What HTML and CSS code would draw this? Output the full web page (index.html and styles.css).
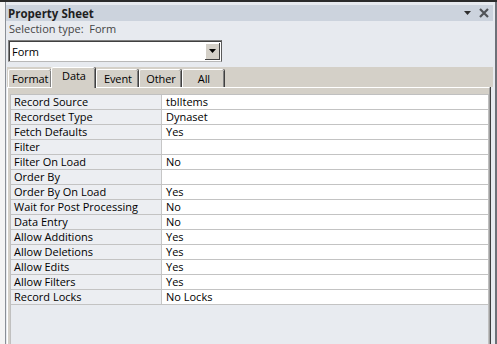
FILE: index.html
```html
<!DOCTYPE html>
<html lang="en">
<head>
    <meta charset="UTF-8">
    <title>Property Sheet</title>
    <link rel="stylesheet" href="styles.css">
</head>
<body>
    <div class="frame">
        <div class="backdrop"></div>
        <div class="sheet">
            <div class="titlebar">
                <span class="title">Property Sheet</span>
                <span class="tools">
                    <svg width="8" height="5" viewBox="0 0 8 5"><path d="M0 0h7L3.5 4z" fill="#2e2e2e"/></svg>
                    <svg width="10" height="10" viewBox="0 0 10 10"><path d="M1 1l8 8M9 1l-8 8" stroke="#505357" stroke-width="2.2"/></svg>
                </span>
            </div>
            <div class="seltype">Selection type:&nbsp; Form</div>
            <div class="combo">
                <span class="combo-text">Form</span>
                <span class="combo-btn"><svg width="7" height="4" viewBox="0 0 7 4"><path d="M0 0h7L3.5 4z" fill="#000"/></svg></span>
            </div>
            <div class="tabs">
                <div class="tab">Format</div>
                <div class="tab active">Data</div>
                <div class="tab">Event</div>
                <div class="tab">Other</div>
                <div class="tab">All</div>
            </div>
            <div class="page">
                <div class="grid">
                    <div class="row"><div class="label">Record Source</div><div class="value">tblItems</div></div>
                    <div class="row"><div class="label">Recordset Type</div><div class="value">Dynaset</div></div>
                    <div class="row"><div class="label">Fetch Defaults</div><div class="value">Yes</div></div>
                    <div class="row"><div class="label">Filter</div><div class="value"></div></div>
                    <div class="row"><div class="label">Filter On Load</div><div class="value">No</div></div>
                    <div class="row"><div class="label">Order By</div><div class="value"></div></div>
                    <div class="row"><div class="label">Order By On Load</div><div class="value">Yes</div></div>
                    <div class="row"><div class="label">Wait for Post Processing</div><div class="value">No</div></div>
                    <div class="row"><div class="label">Data Entry</div><div class="value">No</div></div>
                    <div class="row"><div class="label">Allow Additions</div><div class="value">Yes</div></div>
                    <div class="row"><div class="label">Allow Deletions</div><div class="value">Yes</div></div>
                    <div class="row"><div class="label">Allow Edits</div><div class="value">Yes</div></div>
                    <div class="row"><div class="label">Allow Filters</div><div class="value">Yes</div></div>
                    <div class="row"><div class="label">Record Locks</div><div class="value">No Locks</div></div>
                </div>
            </div>
        </div>
    </div>
</body>
</html>
```

FILE: styles.css
```css
body {
    margin: 0;
    width: 497px;
    height: 344px;
    overflow: hidden;
    background-color: #fff;
    font-family: "Open Sans", "Segoe UI", sans-serif;
    font-size: 11px;
    color: #000;
}
.frame {
    display: flex;
    height: 344px;
    box-sizing: border-box;
    border-top: 2px solid #2b2b2b;
}
.backdrop {
    width: 5px;
    background-color: #f4f4f4;
}
.sheet {
    flex: 1;
    display: flex;
    flex-direction: column;
    padding-top: 3px;
    background-color: #e7eaef;
    border-left: 1px solid #8a8f96;
    border-right: 2px solid #6d7178;
}
.titlebar {
    display: flex;
    align-items: center;
    justify-content: space-between;
    height: 16px;
    margin-right: 2px;
    padding: 0 4px 0 2px;
    background-color: #ccd3dd;
}
.title {
    font-weight: bold;
    font-size: 11.5px;
    color: #1f1f1f;
}
.tools {
    display: flex;
    align-items: center;
    gap: 7px;
}
.seltype {
    height: 15px;
    line-height: 15px;
    padding-left: 3px;
    color: #454545;
}
.combo {
    display: flex;
    align-items: center;
    justify-content: space-between;
    width: 214px;
    height: 22px;
    box-sizing: border-box;
    margin: 4px 0 0 2px;
    padding: 0 1px 0 3px;
    background-color: #fff;
    border: 1px solid #808080;
    border-right-color: #5a5a5a;
    border-bottom-color: #b8b8b8;
    box-shadow: inset 1px 1px 0 #404040;
}
.combo-btn {
    display: flex;
    align-items: center;
    justify-content: center;
    width: 15px;
    height: 17px;
    background-color: #d4d0c8;
    box-shadow: inset -1px -1px 0 #404040, inset 1px 1px 0 #fff;
}
.tabs {
    display: flex;
    align-items: flex-end;
    height: 20px;
    margin: 5px 2px 0 1px;
    padding-left: 1px;
    background-color: #d4d0c8;
}
.tab {
    min-width: 35px;
    height: 17px;
    line-height: 17px;
    margin-right: 1px;
    padding: 0 3px;
    text-align: center;
    white-space: nowrap;
    letter-spacing: -0.1px;
    border-left: 1px solid #fff;
    border-top: 1px solid #fff;
    border-radius: 2px 2px 0 0;
    box-shadow: inset -1px 0 0 #808080, 1px 0 0 #404040;
    background-color: #d4d0c8;
}
.tab.active {
    position: relative;
    height: 20px;
    line-height: 16px;
    margin: 0 1px -1px -1px;
    padding: 0 4px;
    z-index: 1;
}
.page {
    flex: 1;
    display: flex;
    flex-direction: column;
    margin: 0 5px 0 1px;
    padding: 6px 0 0 2px;
    background-color: #d4d0c8;
    border-top: 1px solid #fff;
    border-left: 1px solid #fff;
    border-right: 1px solid #a0a0a0;
    box-shadow: 1px 0 0 #404040;
}
.grid {
    flex: 1;
    background-color: #e8ebf0;
    border: 1px solid #c0c0c0;
    border-bottom: none;
}
.row {
    display: grid;
    grid-template-columns: 151px 1fr;
    height: 14px;
    line-height: 14px;
    border-bottom: 1px solid #c3c3c3;
}
.label {
    padding-left: 3px;
    background-color: #eceef2;
    border-right: 1px solid #c6c6c6;
    white-space: nowrap;
}
.value {
    padding-left: 4px;
    background-color: #fff;
}
```
